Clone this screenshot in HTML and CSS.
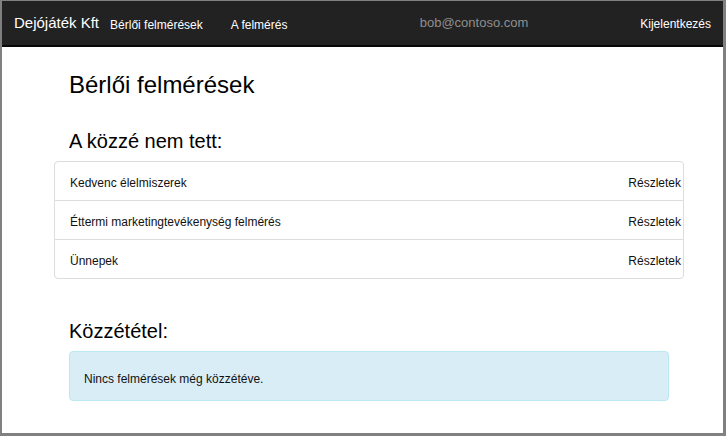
FILE: index.html
```html
<!DOCTYPE html>
<html lang="hu">
<head>
<meta charset="utf-8">
<title>Bérlői felmérések</title>
<link rel="stylesheet" href="styles.css">
</head>
<body>
<div class="frame">
  <nav class="navbar">
    <a class="brand" href="#">Dejójáték Kft</a>
    <ul class="nav">
      <li><a href="#">Bérlői felmérések</a></li>
      <li><a href="#">A felmérés</a></li>
    </ul>
    <span class="user">bob@contoso.com</span>
    <a class="logout" href="#">Kijelentkezés</a>
  </nav>
  <main class="container">
    <h1 class="title">Bérlői felmérések</h1>
    <h2 class="section">A közzé nem tett:</h2>
    <ul class="list-group">
      <li class="list-item"><span>Kedvenc élelmiszerek</span><a href="#">Részletek</a></li>
      <li class="list-item"><span>Éttermi marketingtevékenység felmérés</span><a href="#">Részletek</a></li>
      <li class="list-item"><span>Ünnepek</span><a href="#">Részletek</a></li>
    </ul>
    <h2 class="section section-published">Közzététel:</h2>
    <div class="alert">Nincs felmérések még közzétéve.</div>
  </main>
</div>
</body>
</html>
```
FILE: styles.css
```css
* { box-sizing: border-box; }
html, body { margin: 0; padding: 0; }
body {
  font-family: "Liberation Sans", Arial, sans-serif;
  color: #111;
  background: #fff;
}
a { text-decoration: none; color: inherit; }
ul { list-style: none; margin: 0; padding: 0; }

.frame {
  width: 726px;
  height: 436px;
  border-style: solid;
  border-color: #808080;
  border-width: 1px 3px 3px 2px;
  overflow: hidden;
}

.navbar {
  display: flex;
  align-items: flex-start;
  height: 46px;
  background: #222;
  border-bottom: 2px solid #080808;
  padding: 0 12px 0 12px;
}
.brand {
  color: #fff;
  font-size: 15px;
  line-height: 15px;
  padding-top: 14px;
}
.nav {
  display: flex;
  gap: 28px;
  margin-left: 11px;
  padding-top: 14px;
}
.nav a {
  color: #fff;
  font-size: 12px;
  line-height: 12px;
}
.user {
  margin-left: auto;
  color: #8f8f8f;
  font-size: 13px;
  line-height: 13px;
  padding-top: 15px;
}
.logout {
  margin-left: 112px;
  color: #fff;
  font-size: 12px;
  line-height: 12px;
  padding-top: 17px;
}

.container {
  width: 600px;
  margin-left: 67px;
  padding-top: 24px;
}
.title {
  margin: 0;
  font-size: 24px;
  line-height: 28px;
  font-weight: normal;
  color: #000;
}
.section {
  margin: 30px 0 8px;
  font-size: 20px;
  line-height: 24px;
  font-weight: normal;
  color: #000;
}
.section-published { margin-top: 40px; }

.list-group {
  margin: 0 -15px;
  border: 1px solid #ddd;
  border-radius: 4px;
}
.list-item {
  display: flex;
  justify-content: space-between;
  padding: 12px 2px 8px 15px;
  font-size: 12px;
  line-height: 18px;
  color: #111;
}
.list-item + .list-item { border-top: 1px solid #ddd; }

.alert {
  background: #d9edf7;
  border: 1px solid #bce8f1;
  border-radius: 4px;
  padding: 18px 14px 12px;
  font-size: 12px;
  line-height: 18px;
  color: #111;
}
```
